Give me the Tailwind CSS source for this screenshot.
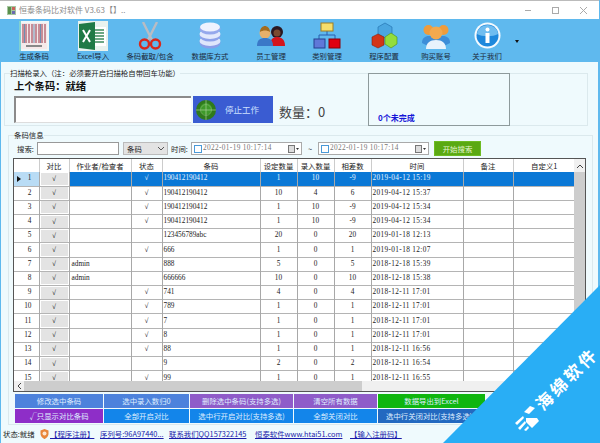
<!DOCTYPE html>
<html lang="en">
<head>
    <meta charset="UTF-8">
    <title>恒泰条码比对软件</title>
    <script src="https://cdn.jsdelivr.net/npm/@tailwindcss/browser@4"></script>
</head>
<body class="bg-white">
<div class="relative w-[600px] h-[443px] overflow-hidden bg-[#5fb9ee] pl-[1px] pr-[2px] font-['Noto_Sans_CJK_SC',sans-serif] text-[7.4px] text-[#222]">

    <!-- Title bar -->
    <div class="flex items-center h-[19px] bg-white border-t border-[#bbb] -mx-[1px] pl-[7px] pr-[12px]">
        <svg class="w-[9px] h-[9px] mr-[3px]" viewBox="0 0 9 9"><rect width="9" height="9" fill="#a7c6a0"/><rect x="1" y="1" width="3" height="7" fill="#5a8f4c"/><rect x="5" y="1" width="3" height="3" fill="#c9605a"/><rect x="5" y="5" width="3" height="3" fill="#6a6ab0"/></svg>
        <span class="text-[8px] text-[#8a8a8a]">恒泰条码比对软件 V3.63【】..</span>
        <div class="ml-auto flex items-center gap-[21px] text-[#999]">
            <span class="w-[6px] h-px bg-[#aaa]"></span>
            <span class="w-[7px] h-[7px] border border-[#aaa]"></span>
            <svg class="w-[7px] h-[7px]" viewBox="0 0 7 7"><path d="M0 0L7 7M7 0L0 7" stroke="#aaa" fill="none"/></svg>
        </div>
    </div>

    <!-- Toolbar -->
    <div class="relative h-[43px] text-[#1c2a3a]">
        <div class="absolute left-[18px] top-[1px] flex flex-col items-center w-[30px]">
            <div class="h-[31px] flex items-center">
                <svg class="w-[30px] h-[30px]" viewBox="0 0 30 30"><rect width="30" height="30" fill="#eef6f7"/><rect x="2" y="2" width="26" height="26" fill="#f5e9ea"/><path d="M4 3v19M7 3v19M10 3v19M13 3v19M17 3v19M20 3v19M23 3v19M26 3v19" stroke="#b86f7c" stroke-width="1.500"/><path d="M5.500 3v19M15 3v19M21.500 3v19" stroke="#6f8fb0" stroke-width="1"/><rect x="7" y="24" width="16" height="2" fill="#888"/><rect y="0" width="2" height="30" fill="#7fd0d0"/></svg>
            </div>
            <span class="leading-[10px] whitespace-nowrap">生成条码</span>
        </div>
        <div class="absolute left-[77px] top-[1px] flex flex-col items-center w-[30px]">
            <div class="h-[31px] flex items-center">
                <svg class="w-[30px] h-[30px]" viewBox="0 0 30 30"><rect width="30" height="30" fill="#e8f2ee"/><rect x="14" y="6" width="14" height="19" fill="#fff"/><path d="M17 9h9M17 12h9M17 15h9M17 18h9M17 21h9" stroke="#3b8a5c" stroke-width="1.600"/><path d="M1 3L17 1V29L1 27Z" fill="#1f7a46"/><path d="M5 9L12 21M12 9L5 21" stroke="#fff" stroke-width="2" fill="none"/></svg>
            </div>
            <span class="leading-[10px] whitespace-nowrap">Excel导入</span>
        </div>
        <div class="absolute left-[134px] top-[1px] flex flex-col items-center w-[30px]">
            <div class="h-[31px] flex items-center">
                <svg class="w-[24px] h-[28px]" viewBox="0 0 24 28"><path d="M5 0L14 18M19 0L10 18" stroke="#b9bcc4" stroke-width="2.400" fill="none"/><circle cx="6.500" cy="22" r="4.500" fill="none" stroke="#d8281c" stroke-width="2.400"/><circle cx="17.500" cy="22" r="4.500" fill="none" stroke="#d8281c" stroke-width="2.400"/></svg>
            </div>
            <span class="leading-[10px] whitespace-nowrap">条码截取/包含</span>
        </div>
        <div class="absolute left-[194px] top-[1px] flex flex-col items-center w-[30px]">
            <div class="h-[31px] flex items-center">
                <svg class="w-[22px] h-[27px]" viewBox="0 0 22 27"><ellipse cx="11" cy="21" rx="10.500" ry="5.500" fill="#8a9ee8"/><ellipse cx="11" cy="19" rx="10.500" ry="5" fill="#dfe6fb"/><ellipse cx="11" cy="14" rx="10.500" ry="5.500" fill="#8ea2ea"/><ellipse cx="11" cy="12" rx="10.500" ry="5" fill="#e2e9fc"/><ellipse cx="11" cy="7" rx="10.500" ry="5.500" fill="#95a8ec"/><ellipse cx="11" cy="5" rx="10" ry="4.500" fill="#eef2fe"/></svg>
            </div>
            <span class="leading-[10px] whitespace-nowrap">数据库方式</span>
        </div>
        <div class="absolute left-[255px] top-[1px] flex flex-col items-center w-[30px]">
            <div class="h-[31px] flex items-center">
                <svg class="w-[28px] h-[22px]" viewBox="0 0 28 22"><circle cx="20" cy="7" r="6" fill="#2a1620"/><path d="M13 21c0-7 3-9 7-9s8 2 8 9z" fill="#d3141c"/><circle cx="20" cy="8" r="3.500" fill="#7a4a30"/><circle cx="8" cy="8" r="5.500" fill="#e7b06a"/><path d="M3 7c0-4 3-6 5-6s5 2 5 6c-3-2-7-2-10 0z" fill="#a46c1e"/><path d="M0 21c0-6 3-8 8-8s8 2 8 8z" fill="#3a78c8"/></svg>
            </div>
            <span class="leading-[10px] whitespace-nowrap">员工管理</span>
        </div>
        <div class="absolute left-[311px] top-[1px] flex flex-col items-center w-[30px]">
            <div class="h-[31px] flex items-center">
                <svg class="w-[28px] h-[27px]" viewBox="0 0 28 27"><path d="M14 8V13M6 18V13H22V18" stroke="#2b5fb0" fill="none" stroke-width="1"/><rect x="8" y="1" width="12" height="8" fill="#f4de6c" stroke="#a07f20"/><rect x="1" y="17" width="11" height="9" fill="#5f78d8" stroke="#27408f"/><rect x="16" y="17" width="11" height="9" fill="#e00010" stroke="#8a0008"/></svg>
            </div>
            <span class="leading-[10px] whitespace-nowrap">类别管理</span>
        </div>
        <div class="absolute left-[368px] top-[1px] flex flex-col items-center w-[30px]">
            <div class="h-[31px] flex items-center">
                <svg class="w-[27px] h-[27px]" viewBox="0 0 27 27"><path d="M14 1L21 5V12L14 16L7 12V5Z" fill="#4aa6e0" stroke="#1f6ca8" stroke-width=".6"/><path d="M7 12L13 15V23L7 26L1 23V15Z" fill="#d23518" stroke="#8a1f0c" stroke-width=".6"/><path d="M20 11L26 15V22L20 26L14 22V15Z" fill="#93dd3c" stroke="#4f8f14" stroke-width=".6"/></svg>
            </div>
            <span class="leading-[10px] whitespace-nowrap">程序配置</span>
        </div>
        <div class="absolute left-[420px] top-[1px] flex flex-col items-center w-[30px]">
            <div class="h-[31px] flex items-center">
                <svg class="w-[28px] h-[26px]" viewBox="0 0 28 26"><circle cx="6.500" cy="7" r="5" fill="#ef9c3c"/><circle cx="21.500" cy="7" r="5" fill="#ef9c3c"/><path d="M0 20c0-5 3-7 7-7h14c4 0 7 2 7 7l-6 3H6z" fill="#3d8ed8"/><circle cx="14" cy="10" r="6.500" fill="#f3a94e"/><path d="M4 26c0-6 4-9 10-9s10 3 10 9z" fill="#e8f3fc"/></svg>
            </div>
            <span class="leading-[10px] whitespace-nowrap">购买账号</span>
        </div>
        <div class="absolute left-[471px] top-[1px] flex flex-col items-center w-[30px]">
            <div class="h-[31px] flex items-center">
                <svg class="w-[27px] h-[27px]" viewBox="0 0 27 27"><circle cx="13.500" cy="13.500" r="13" fill="#f4fafe"/><circle cx="13.500" cy="13.500" r="11" fill="#1e88dc"/><path d="M3 12a10.500 9 0 0 1 21 0c-5 3-16 3-21 0z" fill="#6fbdf0"/><circle cx="13.500" cy="7.500" r="2" fill="#fff"/><rect x="11.500" y="11" width="4" height="10" fill="#fff"/></svg>
            </div>
            <span class="leading-[10px] whitespace-nowrap">关于我们</span>
        </div>
        <span class="absolute left-[514px] top-[21px] border-x-[2px] border-t-[3px] border-x-transparent border-t-[#111]"></span>
    </div>

    <div class="h-[381px] bg-[#effafd] overflow-hidden">
        <!-- Scan group -->
        <div class="relative mt-[11px] ml-[3px] w-[584px] h-[53px] border border-[#dbe9ed] flex pt-[5px] pl-[9px]">
            <span class="absolute left-[5px] -top-[6px] bg-[#effafd] leading-[9px]">扫描枪录入（注：必须要开启扫描枪自带回车功能）</span>
            <div class="w-[354px]">
                <div class="text-[10.300px] font-bold leading-[13px] text-[#111]">上个条码：就绪</div>
                <div class="flex items-center mt-[4px]">
                    <div class="w-[177px] h-[27px] bg-white border-t-2 border-l-2 border-[#8b8b8b] border-b border-b-[#ddd]"></div>
                    <div class="flex items-center w-[80px] h-[27px] ml-[2px] bg-[#3a5cd2] text-[#cfe0ff] text-[8.500px] pl-[3px]">
                        <svg class="w-[20px] h-[20px] mr-[9px]" viewBox="0 0 20 20"><circle cx="10" cy="10" r="10" fill="#2f7a1c"/><circle cx="10" cy="9" r="6" fill="#3f9a2a"/><path d="M10 0V20M0 10H20" stroke="#b5d8a8" stroke-width=".6"/><circle cx="10" cy="10" r="5.500" fill="none" stroke="#8cc27c" stroke-width=".5"/></svg>
                        <span>停止工作</span>
                    </div>
                    <span class="ml-[6px] text-[13px] text-[#444] mt-[5px] whitespace-nowrap">数量：0</span>
                </div>
            </div>
            <div class="-mt-[6px] w-[142px] h-[53px] border border-[#8e9a9c] flex items-end pl-[9px] pb-[1px] text-[#1616d8] font-bold text-[8px]">0个未完成</div>
        </div>

        <!-- Barcode info group -->
        <div class="relative mt-[9px] ml-[7px] w-[585px] h-[290px] border border-[#dbe9ed] pt-[5px] pl-[4px]">
            <span class="absolute left-[5px] -top-[6px] bg-[#effafd] leading-[9px]">条码信息</span>
            <!-- Search row -->
            <div class="flex items-center h-[15px] pl-[4px]">
                <span class="w-[20px]">搜索:</span>
                <div class="w-[82px] h-[13px] bg-white border border-[#999]"></div>
                <div class="flex items-center justify-between w-[45px] h-[13px] ml-[4px] px-[3px] bg-[#e3e3e3] border border-[#bbb]">
                    <span>条码</span>
                    <svg class="w-[6px] h-[4px]" viewBox="0 0 6 4"><path d="M0 0L3 3L6 0" fill="none" stroke="#555"/></svg>
                </div>
                <span class="ml-[3px] w-[20px]">时间:</span>
                <div class="flex items-center w-[111px] h-[13px] bg-white border border-[#aaa] pl-[2px] font-['Liberation_Serif',serif] text-[7.300px] tracking-[.36px] text-[#777] whitespace-nowrap">
                    <span class="w-[8px] h-[8px] mr-[1px] border border-[#4a9ad8]"></span>2022-01-19 10:17:14
                    <svg class="ml-auto mr-[2px] w-[11px] h-[8px]" viewBox="0 0 11 8"><rect x=".5" y=".5" width="6" height="7" fill="#ddd" stroke="#777"/><path d="M8 3L9.500 5L11 3Z" fill="#333"/></svg>
                </div>
                <span class="w-[16px] text-center">~</span>
                <div class="flex items-center w-[111px] h-[13px] bg-white border border-[#aaa] pl-[2px] font-['Liberation_Serif',serif] text-[7.300px] tracking-[.36px] text-[#777] whitespace-nowrap">
                    <span class="w-[8px] h-[8px] mr-[1px] border border-[#4a9ad8]"></span>2022-01-19 10:17:14
                    <svg class="ml-auto mr-[2px] w-[11px] h-[8px]" viewBox="0 0 11 8"><rect x=".5" y=".5" width="6" height="7" fill="#ddd" stroke="#777"/><path d="M8 3L9.500 5L11 3Z" fill="#333"/></svg>
                </div>
                <div class="w-[47px] h-[15px] ml-[5px] flex items-center justify-center bg-[#5aa912] text-[#e6f5d0] border border-[#6dbb22]">开始搜索</div>
            </div>

            <!-- Grid -->
            <div class="relative w-[573px] h-[234px] mt-[2px] bg-[#f2f2f2] border border-[#555] overflow-hidden">
                <table class="table-fixed border-collapse w-[561px] bg-white">
                    <colgroup>
                        <col class="w-[25px]"><col class="w-[30px]"><col class="w-[62px]"><col class="w-[31px]"><col class="w-[98px]"><col class="w-[37px]"><col class="w-[37px]"><col class="w-[37px]"><col class="w-[92px]"><col class="w-[50px]"><col class="w-[62px]">
                    </colgroup>
                    <thead>
                        <tr class="h-[13px] text-center">
                            <th class="font-normal"></th>
                            <th class="font-normal border-l border-[#ccc]">对比</th>
                            <th class="font-normal border-l border-[#ccc]">作业者/检查者</th>
                            <th class="font-normal border-l border-[#ccc]">状态</th>
                            <th class="font-normal border-l border-[#ccc]">条码</th>
                            <th class="font-normal border-l border-[#ccc]">设定数量</th>
                            <th class="font-normal border-l border-[#ccc]">录入数量</th>
                            <th class="font-normal border-l border-[#ccc]">相差数</th>
                            <th class="font-normal border-l border-[#ccc]">时间</th>
                            <th class="font-normal border-l border-[#ccc]">备注</th>
                            <th class="font-normal border-l border-[#ccc]">自定义1</th>
                        </tr>
                    </thead>
                    <tbody id="rows" class="font-['Liberation_Serif',serif] text-[7.300px]"></tbody>
                </table>
                <!-- Scrollbars -->
                <div class="absolute right-0 top-0 bottom-[10px] w-[11px] bg-[#cdcdcd]">
                    <div class="h-[13px] bg-[#f0f0f0] flex items-center justify-center">
                        <svg class="w-[6px] h-[4px]" viewBox="0 0 6 4"><path d="M0 4L3 1L6 4" fill="none" stroke="#444"/></svg>
                    </div>
                </div>
                <div class="absolute left-0 right-0 bottom-0 h-[10px] flex bg-[#f0f0f0]">
                    <div class="w-[10px] flex items-center justify-center">
                        <svg class="w-[4px] h-[6px]" viewBox="0 0 4 6"><path d="M4 0L1 3L4 6" fill="none" stroke="#444"/></svg>
                    </div>
                    <div class="w-[338px] bg-[#cdcdcd]"></div>
                </div>
            </div>

            <!-- Action buttons -->
            <div class="grid grid-cols-[88px_85px_103px_83px_107px] gap-[1px] mt-[2px] ml-[2px] text-center text-[7.400px] leading-[14px] text-[#dfeeff] relative">
                <div class="bg-[#4d82dc]">修改选中条码</div>
                <div class="bg-[#4d82dc]">选中录入数归0</div>
                <div class="bg-[#8f5cc9]">删除选中条码(支持多选)</div>
                <div class="bg-[#8f5cc9]">清空所有数据</div>
                <div class="bg-[#0fb60f]">数据导出到Excel</div>
                <div class="bg-[#8e2ec8]">√只显示对比条码</div>
                <div class="bg-[#1385ea]">全部开启对比</div>
                <div class="bg-[#1385ea]">选中行开启对比(支持多选)</div>
                <div class="bg-[#1385ea]">全部关闭对比</div>
                <div class="bg-[#2369c0] w-[120px] text-left pl-[8px] whitespace-nowrap">选中行关闭对比(支持多选)</div>
            </div>
        </div>

        <!-- Status bar -->
        <div class="flex items-center h-[16px] mt-[1px] pl-[2px] text-[7.400px] whitespace-nowrap">
            <span class="w-[37px]">状态:就绪</span>
            <svg class="w-[9px] h-[10px] mr-[1px]" viewBox="0 0 9 10"><path d="M.5 1.500L4.500 0L8.500 1.500V5C8.500 8 4.500 10 4.500 10S.5 8 .5 5Z" fill="#e8863a"/><circle cx="4.500" cy="4.500" r="2" fill="#fde6cf"/></svg>
            <a class="text-[#1a1aaa] underline w-[50px]">【程序注册】</a>
            <a class="text-[#1a1aaa] underline w-[69px]">序列号:96A97440...</a>
            <a class="text-[#1a1aaa] underline w-[86px]">联系我们QQ157322145</a>
            <a class="text-[#1a1aaa] underline w-[95px]">恒泰软件www.htai51.com</a>
            <a class="text-[#1a1aaa] underline">【输入注册码】</a>
        </div>
    </div>

    <!-- Corner watermark -->
    <div class="absolute right-0 bottom-0 w-[157px] h-[158px]">
        <div class="absolute inset-0 bg-[#29aef5] [clip-path:polygon(100%_0,100%_100%,0_100%)]"></div>
        <span class="absolute left-[123px] top-[93px] -translate-x-1/2 -translate-y-1/2 -rotate-45 text-white font-bold text-[17px] leading-none tracking-[3px] whitespace-nowrap">海绵软件</span>
        <svg class="absolute left-[69px] top-[119px] w-[28px] h-[28px]" viewBox="0 0 28 28"><path d="M12 8L18 2L23 4L17 10ZM14 14H25L27 17L20 24L14 18ZM3 19L11 12L12 14L5 21ZM6 24L13 17L14 19L8 26ZM12 26L16 22L17 24L14 27Z" fill="#fff"/></svg>
    </div>
</div>

<script>
// worker, checked, code, set, entered, diff, time
const data = [
    ['', true, '190412190412', 1, 10, -9, '2019-04-12 15:19'],
    ['', true, '190412190412', 10, 4, 6, '2019-04-12 15:37'],
    ['', true, '190412190412', 1, 10, -9, '2019-04-12 15:34'],
    ['', true, '190412190412', 1, 10, -9, '2019-04-12 15:34'],
    ['', false, '123456789abc', 20, 0, 20, '2019-01-18 12:13'],
    ['', true, '666', 1, 0, 1, '2019-01-18 12:07'],
    ['admin', false, '888', 5, 0, 5, '2018-12-18 15:39'],
    ['admin', false, '666666', 10, 0, 10, '2018-12-18 15:38'],
    ['', true, '741', 4, 0, 4, '2018-12-11 17:01'],
    ['', true, '789', 1, 0, 1, '2018-12-11 17:01'],
    ['', true, '7', 1, 0, 1, '2018-12-11 17:01'],
    ['', true, '8', 1, 0, 1, '2018-12-11 17:01'],
    ['', true, '88', 1, 0, 1, '2018-12-11 16:56'],
    ['', false, '9', 2, 0, 2, '2018-12-11 16:54'],
    ['', true, '99', 1, 0, 1, '2018-12-11 16:55'],
];

document.getElementById('rows').innerHTML = data.map((r, i) => {
    const sel = i === 0;
    const rowCls = sel ? 'h-[14.200px] bg-[#0a78d6] text-[#e8f4ff]' : 'h-[14.200px] border-t border-[#b4b4b4]';
    const headCls = sel ? 'bg-[#b9dcf5] text-[#222] text-right pr-[7px]' : 'bg-white text-[#222] text-right pr-[7px]';
    const cell = 'border-l border-[#a8a8a8] p-0';
    return `<tr class="${rowCls}">
        <td class="${headCls} p-0 relative">${sel ? '<span class="absolute left-[3px] top-[4px] border-y-[3px] border-l-[4px] border-y-transparent border-l-[#111]"></span>' : ''}${i + 1}</td>
        <td class="${cell} bg-white"><div class="h-[12px] mx-[1px] bg-[#e3e3e3] text-[#111] text-center leading-[12px] font-medium">√</div></td>
        <td class="${cell} pl-[2px]">${r[0]}</td>
        <td class="${cell} text-center font-medium">${r[1] ? '√' : ''}</td>
        <td class="${cell} pl-[1px]">${r[2]}</td>
        <td class="${cell} text-center">${r[3]}</td>
        <td class="${cell} text-center">${r[4]}</td>
        <td class="${cell} text-center">${r[5]}</td>
        <td class="${cell} pl-[1px] tracking-[.36px]">${r[6]}</td>
        <td class="${cell}"></td>
        <td class="${cell}"></td>
    </tr>`;
}).join('');
</script>
</body>
</html>
